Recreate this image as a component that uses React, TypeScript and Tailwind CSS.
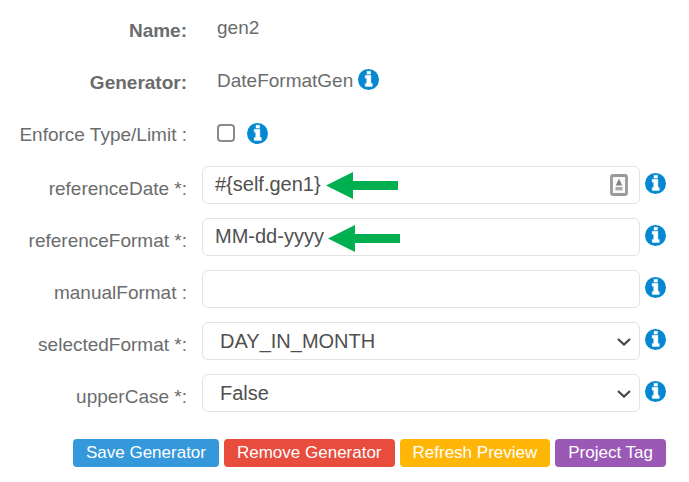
import React from "react";

type FieldProps = {
  id: string;
  label: string;
  children: React.ReactNode;
};

function InfoIcon() {
  return (
    <svg className="h-[21px] w-[21px] shrink-0" viewBox="0 0 21 21" aria-hidden="true">
      <circle cx="10.5" cy="10.5" r="10.5" fill="#0488d1" />
      <path
        d="M9 2.2h3.6v2.9H9zM7.2 6.2h5.7v8.3h1.4v3H7.2v-3h1.5V9.2H7.2z"
        fill="#fff"
        stroke="#fff"
        strokeWidth="0.4"
        strokeLinejoin="round"
      />
    </svg>
  );
}

function Arrow() {
  return (
    <svg className="h-[27px] w-[72px]" viewBox="0 0 72 27" fill="#00b050" aria-hidden="true">
      <path d="M0 13.5 27 0v9h45v9H27v9z" />
    </svg>
  );
}

function CardIcon() {
  return (
    <svg className="h-[22px] w-[18px]" viewBox="0 0 18 22" aria-hidden="true">
      <rect x="1.5" y="1.5" width="15" height="19" rx="1.5" fill="#fafafa" stroke="#999" strokeWidth="2.8" />
      <path d="M9 4.8 10.6 8 12.2 11.4H5.8L7.4 8z" fill="#808080" />
      <path d="M5.5 13h7v3.4h-7z" fill="#a8a8a8" />
    </svg>
  );
}

function Chevron() {
  return (
    <svg className="h-[8px] w-[14px]" viewBox="0 0 14 8" fill="none" stroke="#484848" strokeWidth="2.2" aria-hidden="true">
      <path d="M1 1l6 5.6L13 1" />
    </svg>
  );
}

const labelColumn = "w-[187px] shrink-0 text-right";
const control =
  "block h-[38px] w-full appearance-none rounded-md border border-[#e3e3e3] bg-white text-xl leading-6 text-[#505050] outline-none";

function Field({ id, label, children }: FieldProps) {
  return (
    <div className="flex h-[38px]">
      <label htmlFor={id} className={`${labelColumn} pt-[11px]`}>
        {label}
      </label>
      <div className="relative ml-[15px] min-w-0 flex-1">{children}</div>
      <div className="ml-[5px] pt-[7px]">
        <InfoIcon />
      </div>
    </div>
  );
}

function SelectField({ id, label, options }: { id: string; label: string; options: string[] }) {
  return (
    <Field id={id} label={label}>
      <select id={id} className={`${control} pr-8 pb-px pl-[17px]`}>
        {options.map((option) => (
          <option key={option}>{option}</option>
        ))}
      </select>
      <span className="pointer-events-none absolute top-4 right-[9px]">
        <Chevron />
      </span>
    </Field>
  );
}

const buttons = [
  { text: "Save Generator", color: "bg-[#3498db]" },
  { text: "Remove Generator", color: "bg-[#e74c3c]" },
  { text: "Refresh Preview", color: "bg-[#ffb606]" },
  { text: "Project Tag", color: "bg-[#9b59b6]" },
];

export default function App() {
  return (
    <form
      className="flex flex-col gap-[14px] bg-white pt-[10px] pr-[23px] pb-[14px] font-['Liberation_Sans',Arial,sans-serif] text-[19px] leading-6 text-[#6a6c6e]"
      onSubmit={(event) => event.preventDefault()}
    >
      <div className="flex h-[38px]">
        <span className={`${labelColumn} pt-[9px] font-bold`}>Name:</span>
        <span className="ml-[30px] pt-[6px]">gen2</span>
      </div>
      <div className="flex h-[38px]">
        <span className={`${labelColumn} pt-[9px] font-bold`}>Generator:</span>
        <span className="ml-[30px] flex gap-[5px] pt-[7px]">
          DateFormatGen
          <InfoIcon />
        </span>
      </div>
      <div className="flex h-[38px]">
        <label htmlFor="enforce" className={`${labelColumn} pt-[9px]`}>
          Enforce Type/Limit :
        </label>
        <span className="ml-[30px] flex h-full items-center gap-3">
          <input
            id="enforce"
            type="checkbox"
            className="h-[18px] w-[18px] appearance-none rounded-[4px] border-2 border-[#8c8c8c] bg-white checked:bg-[#0488d1]"
          />
          <InfoIcon />
        </span>
      </div>

      <Field id="referenceDate" label="referenceDate *:">
        <input id="referenceDate" type="text" defaultValue="#{self.gen1}" className={`${control} px-3 pb-px`} />
        <span className="pointer-events-none absolute top-[6px] left-[124px]">
          <Arrow />
        </span>
        <span className="pointer-events-none absolute top-2 right-3">
          <CardIcon />
        </span>
      </Field>
      <Field id="referenceFormat" label="referenceFormat *:">
        <input id="referenceFormat" type="text" defaultValue="MM-dd-yyyy" className={`${control} px-3 pb-px`} />
        <span className="pointer-events-none absolute top-[7px] left-[126px]">
          <Arrow />
        </span>
      </Field>
      <Field id="manualFormat" label="manualFormat :">
        <input id="manualFormat" type="text" className={`${control} px-3 pb-px`} />
      </Field>
      <SelectField id="selectedFormat" label="selectedFormat *:" options={["DAY_IN_MONTH", "DAY_IN_WEEK", "DAY_IN_YEAR"]} />
      <SelectField id="upperCase" label="upperCase *:" options={["False", "True"]} />

      <div className="flex flex-wrap justify-end gap-[5px] pt-[13px]">
        {buttons.map((button) => (
          <button
            key={button.text}
            type="button"
            className={`${button.color} h-7 rounded px-[13px] text-[17px] leading-7 whitespace-nowrap text-white`}
          >
            {button.text}
          </button>
        ))}
      </div>
    </form>
  );
}
